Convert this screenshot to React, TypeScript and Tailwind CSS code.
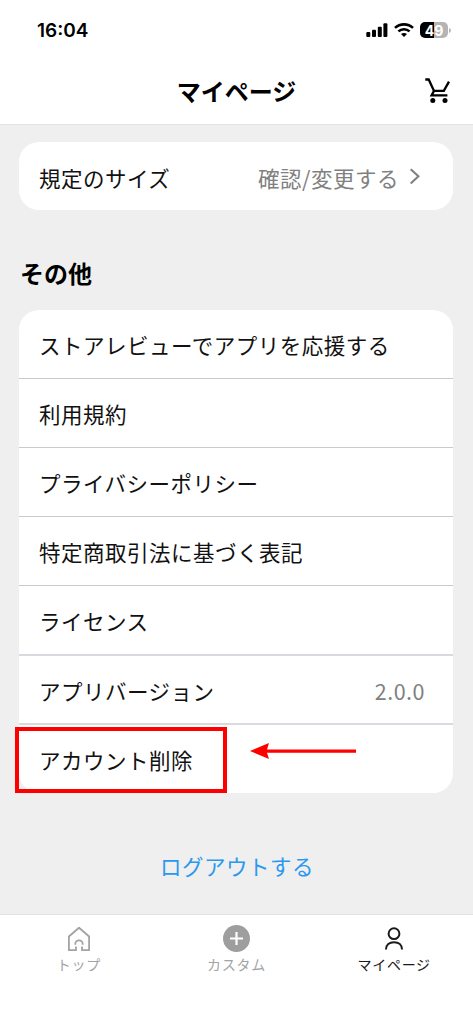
import type { ReactNode } from 'react';

interface MenuItem {
  label: string;
  value?: string;
  line: string;
}

const menuItems: MenuItem[] = [
  { label: 'ストアレビューでアプリを応援する', line: 'h-[69px] border-b border-[#c9c9d1]' },
  { label: '利用規約', line: 'h-[69px] border-b border-[#c9c9d1]' },
  { label: 'プライバシーポリシー', line: 'h-[69px] border-b border-[#c9c9d1]' },
  { label: '特定商取引法に基づく表記', line: 'h-[69px] border-b border-[#c9c9d1]' },
  { label: 'ライセンス', line: 'h-[70px] border-b-2 border-[#d9d9df]' },
  { label: 'アプリバージョン', value: '2.0.0', line: 'h-[69px] border-b-2 border-[#d9d9df]' },
  { label: 'アカウント削除', line: 'h-[68px]' },
];

const StatusBar = () => (
  <div className="flex h-[60px] items-center justify-between pl-[37px] pr-[22px] tracking-normal">
    <span className="font-['Inter'] text-[19px] font-semibold leading-none">16:04</span>
    <div className="flex items-center">
      <svg width="22" height="14" viewBox="0 0 22 14" fill="#000">
        <rect x="0.3" y="9" width="4" height="5" rx="1" />
        <rect x="6" y="6.7" width="4" height="7.3" rx="1" />
        <rect x="11.8" y="3.7" width="4" height="10.3" rx="1" />
        <rect x="17.4" y="0.2" width="4" height="13.8" rx="1" />
      </svg>
      <svg className="ml-[6px]" width="20" height="14" viewBox="0 0 20 14" fill="none" stroke="#000" strokeWidth="2.6">
        <path d="M1 4.9C6 .2 14 .2 19 4.9" />
        <path d="M4.4 8.4C7.6 5.5 12.4 5.5 15.6 8.4" />
        <path d="M7 11.1C8.8 9.7 11.2 9.7 13 11.1L10 14z" fill="#000" stroke="none" />
      </svg>
      <div className="ml-[6px] flex h-4 w-[28px] items-center justify-center rounded-[5px] bg-linear-to-r from-black from-50% to-[#b5b5b5] to-50% pt-px font-['Inter'] text-[14px] font-bold leading-none text-white">
        49
      </div>
      <svg className="ml-px" width="2" height="5" viewBox="0 0 2 5">
        <path d="M0 0Q2 .7 2 2.5T0 5z" fill="#b5b5b5" />
      </svg>
    </div>
  </div>
);

const CartIcon = () => (
  <svg width="26" height="26" viewBox="0 0 26 26" fill="none" stroke="#000" strokeWidth="2.3">
    <path d="M.3 1.5H3.7L9 12.9H18.8L24 3.6" />
    <path d="M9 12.9L6.6 17.4H22.4" />
    <circle cx="7.8" cy="22.5" r="2.5" fill="#000" stroke="none" />
    <circle cx="20" cy="22.5" r="2.5" fill="#000" stroke="none" />
  </svg>
);

const HomeIcon = () => (
  <svg width="24" height="26" viewBox="0 0 24 26" fill="none" stroke="#a3a3a3" strokeWidth="1.8">
    <path d="M9 20.6V24.2H1.9V10.5L12 1.7L22.1 10.5V24.2H15V20.6" strokeLinejoin="round" />
    <path d="M8.3 18.8V18A3.7 3.7 0 0 1 15.7 18V18.8" />
  </svg>
);

const PlusIcon = () => (
  <svg width="27" height="27" viewBox="0 0 27 27">
    <circle cx="13.5" cy="13.5" r="13.5" fill="#9e9e9e" />
    <path d="M7 13.5H20M13.5 7V20" stroke="#fff" strokeWidth="2.2" />
  </svg>
);

const PersonIcon = () => (
  <svg width="20" height="24" viewBox="0 0 20 24" fill="none" stroke="#1a1a1a" strokeWidth="2">
    <circle cx="10" cy="6.7" r="5.4" />
    <path d="M2 22.6C2 17.8 5.3 15.2 10 15.2S18 17.8 18 22.6" />
  </svg>
);

const TabItem = ({ label, color, children }: { label: string; color: string; children: ReactNode }) => (
  <button className={`flex flex-1 flex-col items-center text-[14px] leading-5 tracking-[0.7px] ${color}`}>
    <span className="flex h-[31px] items-center justify-center">{children}</span>
    <span>{label}</span>
  </button>
);

export default function App() {
  return (
    <div className="flex h-[1024px] w-full flex-col overflow-hidden bg-[#efefef] font-['Noto_Sans_CJK_JP',sans-serif] text-[21.5px] leading-[32px] tracking-[0.5px] text-[#111]">
      <header className="h-[125px] shrink-0 border-b border-[#e2e2e2] bg-white text-black">
        <StatusBar />
        <div className="flex h-[62px] items-center">
          <div className="w-[60px]" />
          <h1 className="flex-1 text-center text-[24px] font-bold tracking-normal">マイページ</h1>
          <button className="flex w-[60px] justify-start pl-3">
            <CartIcon />
          </button>
        </div>
      </header>

      <main className="flex-1 pl-[19px] pr-[20px] pt-[17px]">
        <div className="flex h-[68px] items-center justify-between rounded-[20px] bg-white pl-[20px] pr-[33px]">
          <span className="pt-[3px]">規定のサイズ</span>
          <span className="flex items-center text-[#808080]">
            <span className="pt-[3px]">確認/変更する</span>
            <svg className="ml-[10px]" width="11" height="17" viewBox="0 0 11 17" fill="none" stroke="#808080" strokeWidth="2.1">
              <path d="M1.7 1.2L9.4 8.3L1.7 15.5" />
            </svg>
          </span>
        </div>

        <h2 className="mt-[45px] pl-px text-[24px] font-bold leading-[36px] tracking-normal text-black">その他</h2>

        <div className="relative mt-[19px]">
          <ul className="overflow-hidden rounded-[20px] bg-white">
            {menuItems.map((item) => (
              <li key={item.label} className={`flex items-center justify-between pl-[20px] pr-[28px] pt-[2px] ${item.line}`}>
                <span>{item.label}</span>
                {item.value && <span className="text-[#808080]">{item.value}</span>}
              </li>
            ))}
          </ul>
          {/* highlight on the delete row */}
          <div className="absolute -left-[4px] bottom-0 h-[66px] w-[212px] border-4 border-[#ff0000]" />
          <svg className="absolute bottom-[34.5px] left-[231px]" width="106" height="16" viewBox="0 0 106 16" fill="#f00">
            <path d="M0 8L19 0L17 6.4H106V9.8H17L19 16z" />
          </svg>
        </div>

        <div className="mt-[57px] pl-[2px] text-center">
          <button className="leading-[32px] text-[#2b98f0]">ログアウトする</button>
        </div>
      </main>

      <nav className="flex h-[110px] shrink-0 items-start border-t border-[#e2e2e2] bg-white pt-[8px]">
        <TabItem label="トップ" color="text-[#a3a3a3]">
          <HomeIcon />
        </TabItem>
        <TabItem label="カスタム" color="text-[#a3a3a3]">
          <PlusIcon />
        </TabItem>
        <TabItem label="マイページ" color="text-[#1a1a1a]">
          <PersonIcon />
        </TabItem>
      </nav>
    </div>
  );
}
